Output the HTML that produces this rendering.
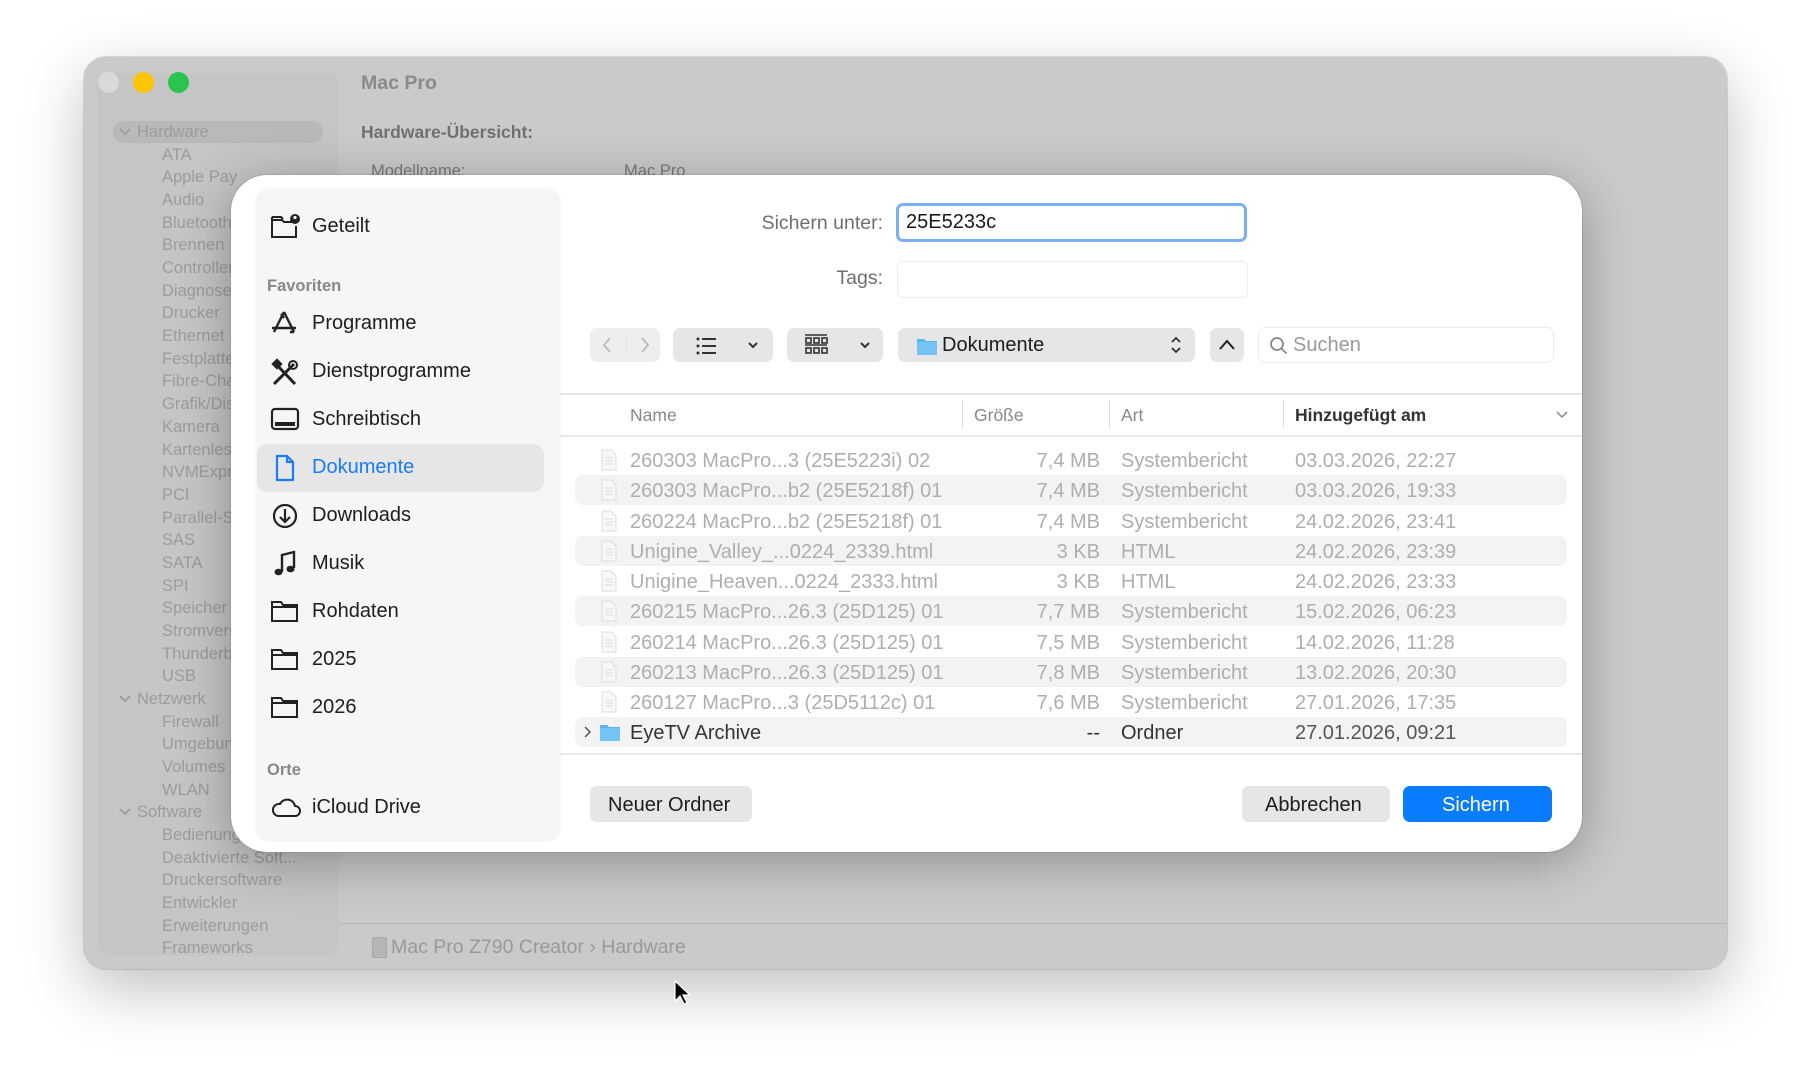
<!DOCTYPE html>
<html><head><meta charset="utf-8"><style>
*{box-sizing:border-box;margin:0;padding:0}
body{width:1810px;height:1080px;background:#fff;font-family:"Liberation Sans",sans-serif;position:relative;overflow:hidden}
.a{position:absolute;white-space:nowrap}
.win{position:absolute;left:84px;top:57px;width:1643px;height:912px;border-radius:22px;background:#cacaca;box-shadow:0 20px 60px rgba(0,0,0,.25),0 0 0 1px rgba(0,0,0,.12)}
.side{position:absolute;left:13px;top:16px;width:242px;height:883px;border-radius:14px;background:#c5c5c5;overflow:hidden}
.si{position:absolute;font-size:16.5px;color:#9c9c9c;left:65px}
.sh{position:absolute;font-size:16.5px;color:#9c9c9c;left:40px}
.dlg{position:absolute;left:231px;top:175px;width:1351px;height:677px;background:#fff;border-radius:36px;box-shadow:0 10px 50px rgba(0,0,0,.3),0 0 0 1px rgba(0,0,0,.08)}
.fav{position:absolute;left:25px;top:13px;width:304px;height:652px;background:#f6f6f6;border-radius:14px;box-shadow:0 1px 3px rgba(0,0,0,.08)}
.fi{position:absolute;left:0;width:304px;height:48px;font-size:20px;color:#1d1d1d}
.fi svg{position:absolute;left:14px;top:12px}
.fi span{position:absolute;left:56px;top:14px}
.btn{position:absolute;background:#e6e6e6;border-radius:7px}
.row{position:absolute;left:344px;width:992px;height:30px;font-size:20px;color:#aeaeae;border-radius:8px}
.row.s{background:#f3f3f3}
.row span{position:absolute;top:5px}
.row svg{position:absolute;top:4px}
</style></head><body>
<div class="win">
 <div class="side">
  <div class="a" style="left:16px;top:48px;width:210px;height:22px;border-radius:11px;background:#b9b9b9"></div>
 </div>
 <div class="a" style="left:14px;top:15px;width:21px;height:21px;border-radius:50%;background:#d9d9d9"></div>
 <div class="a" style="left:49px;top:15px;width:21px;height:21px;border-radius:50%;background:#fcc503"></div>
 <div class="a" style="left:84px;top:15px;width:21px;height:21px;border-radius:50%;background:#2ac44f"></div>
 <div class="a" style="left:277px;top:15px;font-size:19.5px;font-weight:bold;color:#8a8a8a">Mac Pro</div>
 <div class="a" style="left:277px;top:65px;font-size:17.5px;font-weight:bold;color:#707070">Hardware-Übersicht:</div>
 <div class="a" style="left:287px;top:105px;font-size:16.5px;color:#7a7a7a">Modellname:</div>
 <div class="a" style="left:540px;top:105px;font-size:16.5px;color:#7a7a7a">Mac Pro</div>
 <div class="a" style="left:255px;top:866px;width:1388px;height:1px;background:#b8b8b8"></div>
 <div class="a" style="left:288px;top:880px;width:15px;height:21px;border-radius:2px;background:#b5b5b5;border:1px solid #a8a8a8"></div>
 <div class="a" style="left:307px;top:879px;font-size:19.5px;color:#999">Mac Pro Z790 Creator › Hardware</div>
</div>
<div id="sb" style="position:absolute;left:97px;top:73px;width:242px;height:883px;overflow:hidden"></div>
<script>
var items=[["h","Hardware"],"ATA","Apple Pay","Audio","Bluetooth","Brennen","Controller","Diagnose","Drucker","Ethernet","Festplatten","Fibre-Channel","Grafik/Displays","Kamera","Kartenleser","NVMExpress","PCI","Parallel-SCSI","SAS","SATA","SPI","Speicher","Stromversorgung","Thunderbolt","USB",["h","Netzwerk"],"Firewall","Umgebungen","Volumes","WLAN",["h","Software"],"Bedienungshilfen","Deaktivierte Soft...","Druckersoftware","Entwickler","Erweiterungen","Frameworks"];
var h="";items.forEach(function(it,i){var y=132-73+i*22.68-9;
if(typeof it!="string"){h+='<div class="sh" style="top:'+y+'px">'+it[1]+'</div><svg style="position:absolute;left:22px;top:'+(y+5)+'px" width="12" height="8"><path d="M1 1l5 5 5-5" stroke="#9c9c9c" stroke-width="1.8" fill="none"/></svg>';}
else h+='<div class="si" style="top:'+y+'px">'+it+'</div>';});
document.getElementById("sb").innerHTML=h;
</script>
<div class="dlg">
 <div class="fav">
  <div class="fi" style="top:13px"><svg width="30" height="26" viewBox="0 0 30 26"><path d="M2 7h10l2 2h8M2 4h9l2 2M2 4v20h24V13" stroke="#222" stroke-width="2" fill="none"/><circle cx="25" cy="6" r="5" fill="#222"/><circle cx="25" cy="4.5" r="1.6" fill="#fff"/></svg><span>Geteilt</span></div>
  <div class="a" style="left:11px;top:89px;font-size:16.5px;font-weight:bold;color:#888">Favoriten</div>
  <div class="fi" style="top:110px"><svg width="28" height="26" viewBox="0 0 28 26"><path d="M14 2L4 22M14 2l10 20M11 4l3 4M2 18h24M20 22h4" stroke="#222" stroke-width="2.4" fill="none"/></svg><span>Programme</span></div>
  <div class="fi" style="top:158px"><svg width="30" height="30" viewBox="0 0 30 30"><path d="M4 26L24 6M5 5l20 21" stroke="#222" stroke-width="3" fill="none"/><circle cx="23" cy="7" r="4" stroke="#222" stroke-width="2" fill="none"/><rect x="3" y="2" width="8" height="8" fill="#222" transform="rotate(45 7 6)"/></svg><span>Dienstprogramme</span></div>
  <div class="fi" style="top:206px"><svg width="30" height="26" viewBox="0 0 30 26"><rect x="2" y="3" width="26" height="20" rx="3" stroke="#222" stroke-width="2.2" fill="none"/><rect x="5" y="16" width="20" height="4" fill="#222"/></svg><span>Schreibtisch</span></div>
  <div class="a" style="left:1px;top:256px;width:287px;height:48px;border-radius:10px;background:#e6e6e6"></div>
  <div class="fi" style="top:254px;color:#1a7cf5"><svg width="30" height="28" viewBox="0 0 30 28"><path d="M7 2h10l6 6v18H7z M17 2v6h6" stroke="#1a7cf5" stroke-width="2.2" fill="none" stroke-linejoin="round"/></svg><span>Dokumente</span></div>
  <div class="fi" style="top:302px"><svg width="30" height="28" viewBox="0 0 30 28"><circle cx="15" cy="14" r="11" stroke="#222" stroke-width="2.2" fill="none"/><path d="M15 7v13M10 15l5 5 5-5" stroke="#222" stroke-width="2.2" fill="none"/></svg><span>Downloads</span></div>
  <div class="fi" style="top:350px"><svg width="30" height="28" viewBox="0 0 30 28"><path d="M12 22V5l12-3v16" stroke="#222" stroke-width="2.4" fill="none"/><ellipse cx="8.5" cy="22" rx="4" ry="3.3" fill="#222"/><ellipse cx="20.5" cy="19" rx="4" ry="3.3" fill="#222"/></svg><span>Musik</span></div>
  <div class="fi" style="top:398px"><svg width="30" height="26" viewBox="0 0 30 26"><path d="M2 4h9l2 3h14v16H2zM2 9h25" stroke="#222" stroke-width="2" fill="none"/></svg><span>Rohdaten</span></div>
  <div class="fi" style="top:446px"><svg width="30" height="26" viewBox="0 0 30 26"><path d="M2 4h9l2 3h14v16H2zM2 9h25" stroke="#222" stroke-width="2" fill="none"/></svg><span>2025</span></div>
  <div class="fi" style="top:494px"><svg width="30" height="26" viewBox="0 0 30 26"><path d="M2 4h9l2 3h14v16H2zM2 9h25" stroke="#222" stroke-width="2" fill="none"/></svg><span>2026</span></div>
  <div class="a" style="left:11px;top:573px;font-size:16.5px;font-weight:bold;color:#888">Orte</div>
  <div class="fi" style="top:594px"><svg width="32" height="26" viewBox="0 0 32 26"><path d="M8 22h17a5 5 0 0 0 0-10 8 8 0 0 0-15-2 6 6 0 0 0-2 12z" stroke="#222" stroke-width="2" fill="none"/></svg><span>iCloud Drive</span></div>
 </div>
 <div class="a" style="right:699px;top:37px;font-size:19.5px;color:#6f6f6f">Sichern unter:</div>
 <div class="a" style="left:665px;top:28px;width:351px;height:39px;border-radius:7px;border:3.5px solid #7aaef6;background:#fff"></div>
 <div class="a" style="left:675px;top:36px;font-size:20px;color:#1a1a1a">25E5233c</div>
 <div class="a" style="right:699px;top:92px;font-size:19.5px;color:#6f6f6f">Tags:</div>
 <div class="a" style="left:666px;top:86px;width:351px;height:37px;border-radius:6px;border:1px solid #ececec;background:#fff"></div>
 <div class="btn" style="left:359px;top:153px;width:70px;height:34px;background:#eee"></div>
 <svg class="a" style="left:369px;top:160px" width="52" height="20"><path d="M10 3L4 10l6 7M42 3l6 7-6 7" stroke="#bbb" stroke-width="1.8" fill="none"/><path d="M26 2v16" stroke="#ddd"/></svg>
 <div class="btn" style="left:442px;top:153px;width:100px;height:34px"></div>
 <svg class="a" style="left:465px;top:161px" width="70" height="20"><g fill="#333"><circle cx="2" cy="3" r="1.5"/><circle cx="2" cy="10" r="1.5"/><circle cx="2" cy="17" r="1.5"/><rect x="6" y="2" width="14" height="2"/><rect x="6" y="9" width="14" height="2"/><rect x="6" y="16" width="14" height="2"/></g><path d="M53 7l4 4 4-4" stroke="#333" stroke-width="2" fill="none"/></svg>
 <div class="btn" style="left:556px;top:153px;width:96px;height:34px"></div>
 <svg class="a" style="left:574px;top:159px" width="70" height="22"><g stroke="#333" stroke-width="1.6" fill="none"><path d="M0 1h22M0 11h22"/><rect x="1" y="4" width="5" height="5"/><rect x="9" y="4" width="5" height="5"/><rect x="17" y="4" width="5" height="5"/><rect x="1" y="14" width="5" height="5"/><rect x="9" y="14" width="5" height="5"/><rect x="17" y="14" width="5" height="5"/></g><path d="M56 9l4 4 4-4" stroke="#333" stroke-width="2" fill="none"/></svg>
 <div class="btn" style="left:667px;top:153px;width:297px;height:34px"></div>
 <svg class="a" style="left:685px;top:161px" width="22" height="20"><path d="M1 3h7l2 2h11v14H1z" fill="#5ab3ee"/><rect x="1" y="6" width="20" height="13" fill="#73c3f5"/></svg>
 <div class="a" style="left:711px;top:159px;font-size:20px;color:#1d1d1d">Dokumente</div>
 <svg class="a" style="left:939px;top:160px" width="12" height="20"><path d="M2 7l4-4 4 4M2 13l4 4 4-4" stroke="#333" stroke-width="1.8" fill="none"/></svg>
 <div class="btn" style="left:979px;top:153px;width:34px;height:34px"></div>
 <svg class="a" style="left:987px;top:163px" width="18" height="14"><path d="M2 11l7-8 7 8" stroke="#222" stroke-width="2" fill="none"/></svg>
 <div class="a" style="left:1027px;top:152px;width:296px;height:36px;border-radius:7px;border:1px solid #ececec;background:#fff"></div>
 <svg class="a" style="left:1038px;top:161px" width="20" height="20"><circle cx="8" cy="8" r="6" stroke="#888" stroke-width="1.8" fill="none"/><path d="M12.5 12.5l5 5" stroke="#888" stroke-width="1.8"/></svg>
 <div class="a" style="left:1062px;top:159px;font-size:20px;color:#9a9a9a">Suchen</div>
 <div class="a" style="left:329px;top:218px;width:1022px;height:2px;background:#e5e5e5"></div>
 <div class="a" style="left:399px;top:230px;font-size:17.5px;color:#888">Name</div>
 <div class="a" style="left:743px;top:230px;font-size:17.5px;color:#888">Größe</div>
 <div class="a" style="left:890px;top:230px;font-size:17.5px;color:#888">Art</div>
 <div class="a" style="left:1064px;top:230px;font-size:17.5px;font-weight:bold;color:#333">Hinzugefügt am</div>
 <svg class="a" style="left:1325px;top:236px" width="12" height="8"><path d="M1 1l5 5 5-5" stroke="#888" stroke-width="1.5" fill="none"/></svg>
 <div class="a" style="left:731px;top:225px;width:1px;height:28px;background:#ddd"></div>
 <div class="a" style="left:878px;top:225px;width:1px;height:28px;background:#ddd"></div>
 <div class="a" style="left:1052px;top:225px;width:1px;height:28px;background:#ddd"></div>
 <div class="a" style="left:329px;top:260px;width:1022px;height:2px;background:#e8e8e8"></div>
 <div id="rows"></div>
 <div class="a" style="left:329px;top:578px;width:1022px;height:2px;background:#e8e8e8"></div>
 <div class="btn" style="left:359px;top:611px;width:162px;height:36px"></div>
 <div class="a" style="left:377px;top:619px;font-size:20px;color:#1d1d1d">Neuer Ordner</div>
 <div class="btn" style="left:1011px;top:611px;width:148px;height:36px"></div>
 <div class="a" style="left:1034px;top:619px;font-size:20px;color:#1d1d1d">Abbrechen</div>
 <div class="btn" style="left:1172px;top:611px;width:149px;height:36px;background:#0a7cff"></div>
 <div class="a" style="left:1211px;top:619px;font-size:20px;color:#fff">Sichern</div>
</div>
<script>
var r=[["260303 MacPro...3 (25E5223i) 02","7,4 MB","Systembericht","03.03.2026, 22:27"],["260303 MacPro...b2 (25E5218f) 01","7,4 MB","Systembericht","03.03.2026, 19:33"],["260224 MacPro...b2 (25E5218f) 01","7,4 MB","Systembericht","24.02.2026, 23:41"],["Unigine_Valley_...0224_2339.html","3 KB","HTML","24.02.2026, 23:39"],["Unigine_Heaven...0224_2333.html","3 KB","HTML","24.02.2026, 23:33"],["260215 MacPro...26.3 (25D125) 01","7,7 MB","Systembericht","15.02.2026, 06:23"],["260214 MacPro...26.3 (25D125) 01","7,5 MB","Systembericht","14.02.2026, 11:28"],["260213 MacPro...26.3 (25D125) 01","7,8 MB","Systembericht","13.02.2026, 20:30"],["260127 MacPro...3 (25D5112c) 01","7,6 MB","Systembericht","27.01.2026, 17:35"],["EyeTV Archive","--","Ordner","27.01.2026, 09:21"]];
var h="";r.forEach(function(x,i){var y=270+i*30.25;var last=i==9;
var ic=last?'<svg width="22" height="20" style="left:24px;top:6px"><path d="M1 2h7l2 2h11v14H1z" fill="#5ab3ee"/><rect x="1" y="5" width="20" height="13" fill="#73c3f5"/></svg><svg width="8" height="12" style="left:9px;top:9px"><path d="M1 1l5 5-5 5" stroke="#555" stroke-width="1.5" fill="none"/></svg>':'<svg width="16" height="22" style="left:26px"><path d="M1 1h9l5 5v15H1z" fill="#f8f8f8" stroke="#ddd"/><path d="M4 9h8M4 12h8M4 15h8" stroke="#ddd"/></svg>';
h+='<div class="row'+(i%2?' s':'')+'" style="top:'+y+'px;'+(last?'color:#333':'')+'">'+ic+'<span style="left:55px">'+x[0]+'</span><span style="right:467px">'+x[1]+'</span><span style="left:546px">'+x[2]+'</span><span style="left:720px;'+(last?'color:#555':'')+'">'+x[3]+'</span></div>';});
document.getElementById("rows").innerHTML=h;
</script>
<svg class="a" style="left:673px;top:980px" width="18" height="26"><path d="M2 1v20l5-5 4 8 3-1-4-8h7z" fill="#000" stroke="#fff" stroke-width="1.2"/></svg>
</body></html>
